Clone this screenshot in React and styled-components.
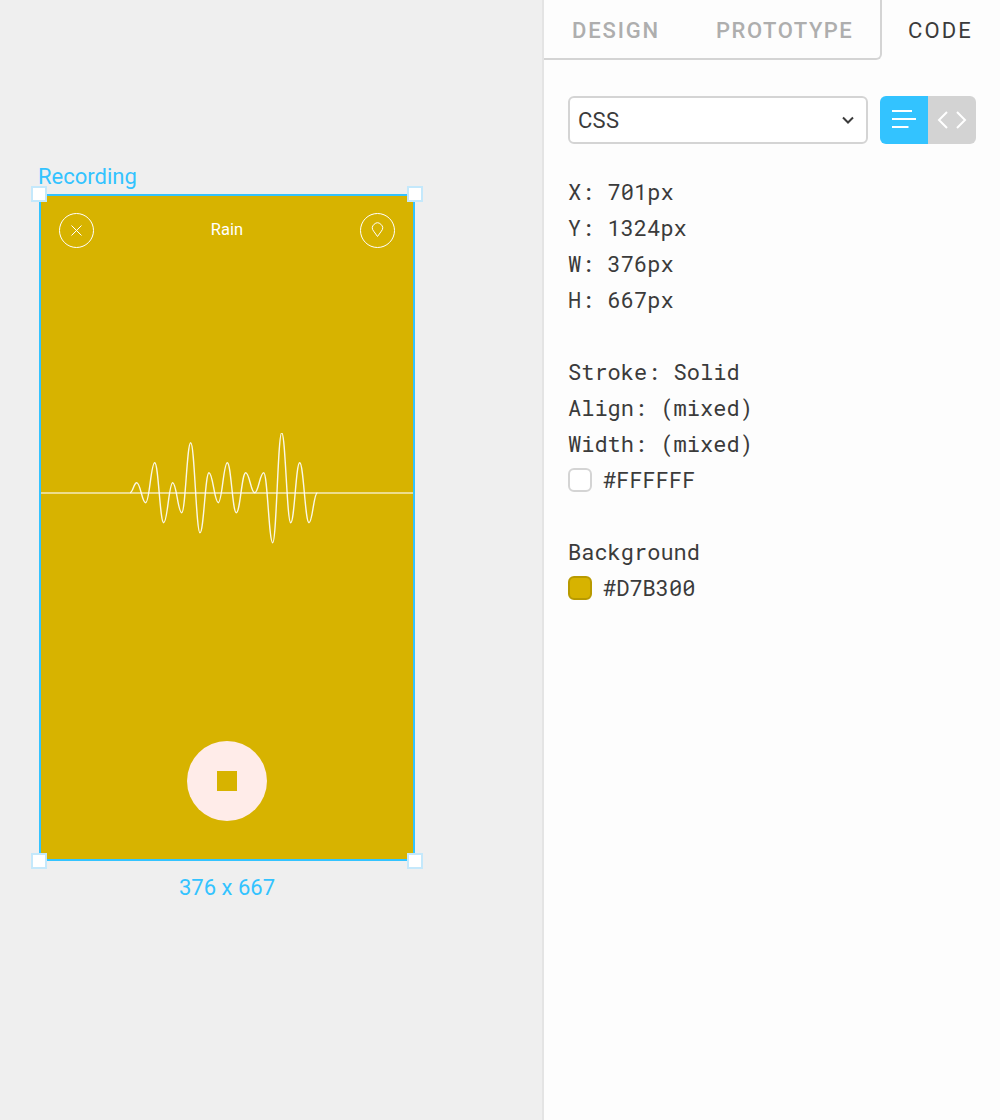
import React from "react";
import styled, { createGlobalStyle } from "styled-components";

const Global = createGlobalStyle`
  html, body { margin: 0; padding: 0; background: #efefef; }
  * { box-sizing: border-box; }
`;

const Page = styled.div`
  display: flex;
  width: 1000px;
  height: 1120px;
  overflow: hidden;
  font-family: Roboto, "Liberation Sans", sans-serif;
`;

const Canvas = styled.main`
  width: 542px;
  flex: none;
  padding: 161px 0 0 39px;
  background: #efefef;
`;

const FrameLabel = styled.div`
  height: 33px;
  margin-left: -1px;
  font-size: 22px;
  line-height: 31px;
  color: #33c3ff;
`;

const Frame = styled.section`
  position: relative;
  width: 376px;
  height: 667px;
  display: flex;
  flex-direction: column;
  background: #d7b300;
  border: 2px solid #33c3ff;
`;

const Handle = styled.span`
  position: absolute;
  width: 16px;
  height: 16px;
  background: #fff;
  border: 2px solid #c4e8fb;
  ${(p) => (p.$y === "top" ? "top: -10px;" : "bottom: -10px;")}
  ${(p) => (p.$x === "left" ? "left: -10px;" : "right: -10px;")}
`;

const Header = styled.header`
  display: flex;
  align-items: center;
  justify-content: space-between;
  height: 35px;
  margin: 17px 18px 0;
`;

const Title = styled.div`
  font-size: 16.5px;
  line-height: 20px;
  margin-top: -2px;
  color: #fff;
`;

const RoundIcon = styled.svg`
  display: block;
  width: 35px;
  height: 35px;
  fill: none;
  stroke: #fff;
  stroke-width: 1;
`;

const Wave = styled.svg`
  display: block;
  width: 372px;
  height: 120px;
  margin-top: 185px;
  flex: none;
`;

const StopButton = styled.button`
  display: flex;
  align-items: center;
  justify-content: center;
  width: 80px;
  height: 80px;
  margin: 188px auto 0;
  padding: 0;
  border: 0;
  border-radius: 50%;
  background: #ffece9;
`;

const StopSquare = styled.span`
  width: 20px;
  height: 20px;
  background: #d7b300;
`;

const Dimensions = styled.div`
  width: 376px;
  margin-top: 14px;
  text-align: center;
  font-size: 22px;
  line-height: 26px;
  color: #33c3ff;
`;

const Panel = styled.aside`
  flex: 1;
  background: #fdfdfd;
  border-left: 2px solid #e4e4e4;
`;

const Tabs = styled.nav`
  display: flex;
  height: 60px;
`;

const InactiveTabs = styled.div`
  display: flex;
  width: 338px;
  height: 60px;
  padding-left: 28px;
  gap: 56px;
  border-right: 2px solid #d4d4d4;
  border-bottom: 2px solid #d4d4d4;
  border-bottom-right-radius: 6px;
`;

const Tab = styled.div`
  font-size: 22px;
  font-weight: ${(p) => (p.$active ? 400 : 500)};
  letter-spacing: ${(p) => p.$spacing};
  line-height: 61px;
  color: ${(p) => (p.$active ? "#3b3b3b" : "#aeaeae")};
  ${(p) => p.$active && "margin-left: 26px;"}
`;

const Body = styled.div`
  padding: 36px 24px 0 24px;
`;

const Controls = styled.div`
  display: flex;
  gap: 12px;
  margin-bottom: 29px;
`;

const Select = styled.div`
  display: flex;
  align-items: center;
  justify-content: space-between;
  width: 300px;
  height: 48px;
  padding: 0 12px 0 8px;
  background: #fff;
  border: 2px solid #d4d4d4;
  border-radius: 6px;
  font-size: 22px;
  letter-spacing: 0.3px;
  color: #3b3b3b;
`;

const Toggle = styled.div`
  display: flex;
  width: 96px;
  height: 48px;
  border-radius: 6px;
  overflow: hidden;
`;

const ToggleButton = styled.div`
  display: flex;
  align-items: center;
  justify-content: center;
  width: 48px;
  background: ${(p) => (p.$active ? "#33c3ff" : "#d3d3d3")};
`;

const Line = styled.div`
  display: flex;
  align-items: center;
  height: 36px;
  font-family: "Roboto Mono", "DejaVu Sans Mono", "Liberation Mono", monospace;
  font-size: 22px;
  color: #3b3b3b;
  white-space: pre;
  margin-top: ${(p) => (p.$gap ? "36px" : "0")};
`;

const Swatch = styled.span`
  width: 24px;
  height: 24px;
  margin: 2px 11px 0 0;
  border-radius: 6px;
  border: 2px solid ${(p) => p.$border};
  background: ${(p) => p.$color};
`;

const wavePoints = [
  [130, 492.7], [136.7, 482.7], [145.7, 502.7], [154.7, 462.7], [163.7, 522.7],
  [172.7, 482.7], [181.7, 512.7], [190.7, 442.7], [200, 532.7], [209, 472.7],
  [218.3, 502.7], [227.3, 462.7], [236.3, 512.7], [245.7, 472.7], [254.7, 492.7],
  [263.7, 472.7], [272.7, 542.7], [281.7, 432.7], [290.7, 522.7], [299.7, 462.7],
  [309, 522.7], [317.3, 492.7],
];

const wavePath = wavePoints
  .map(([x, y], i) => {
    if (i === 0) return `M${x} ${y}`;
    const [px, py] = wavePoints[i - 1];
    const k = (x - px) * 0.42;
    return `C${(px + k).toFixed(1)} ${py} ${(x - k).toFixed(1)} ${y} ${x} ${y}`;
  })
  .join(" ");

export default function App() {
  return (
    <Page>
      <Global />
      <Canvas>
        <FrameLabel>Recording</FrameLabel>
        <Frame>
          <Handle $x="left" $y="top" />
          <Handle $x="right" $y="top" />
          <Handle $x="left" $y="bottom" />
          <Handle $x="right" $y="bottom" />
          <Header>
            <RoundIcon viewBox="0 0 35 35">
              <circle cx="17.5" cy="17.5" r="17" />
              <path d="M12.5 12.5l10 10M22.5 12.5l-10 10" />
            </RoundIcon>
            <Title>Rain</Title>
            <RoundIcon viewBox="0 0 35 35">
              <circle cx="17.5" cy="17.5" r="17" />
              <path d="M17.5 23.5l-3.9-5.4a5 5 0 1 1 7.8 0z" />
            </RoundIcon>
          </Header>
          <Wave viewBox="41 433 372 120">
            <path d="M41 493H413" stroke="#fff" strokeOpacity="0.55" strokeWidth="2" fill="none" />
            <path d={wavePath} stroke="#fff" strokeOpacity="0.9" strokeWidth="1.4" fill="none" />
          </Wave>
          <StopButton aria-label="Stop">
            <StopSquare />
          </StopButton>
        </Frame>
        <Dimensions>376 x 667</Dimensions>
      </Canvas>
      <Panel>
        <Tabs>
          <InactiveTabs>
            <Tab $spacing="1.85px">DESIGN</Tab>
            <Tab $spacing="1.5px">PROTOTYPE</Tab>
          </InactiveTabs>
          <Tab $active $spacing="2.1px">CODE</Tab>
        </Tabs>
        <Body>
          <Controls>
            <Select>
              CSS
              <svg width="12" height="8" viewBox="0 0 12 8" fill="none" stroke="#3b3b3b" strokeWidth="2">
                <path d="M1 1.5l5 5 5-5" />
              </svg>
            </Select>
            <Toggle>
              <ToggleButton $active>
                <svg width="24" height="20" viewBox="0 0 24 20" stroke="#fff" strokeWidth="2" fill="none">
                  <path d="M0 1h20M0 9h24M0 17h16.5" />
                </svg>
              </ToggleButton>
              <ToggleButton>
                <svg width="30" height="20" viewBox="0 0 30 20" stroke="#fff" strokeWidth="2" fill="none">
                  <path d="M10 2l-8 8 8 8M20 2l8 8-8 8" />
                </svg>
              </ToggleButton>
            </Toggle>
          </Controls>
          <Line>X: 701px</Line>
          <Line>Y: 1324px</Line>
          <Line>W: 376px</Line>
          <Line>H: 667px</Line>
          <Line $gap>Stroke: Solid</Line>
          <Line>Align: (mixed)</Line>
          <Line>Width: (mixed)</Line>
          <Line><Swatch $color="#ffffff" $border="#d4d4d4" />#FFFFFF</Line>
          <Line $gap>Background</Line>
          <Line><Swatch $color="#d7b300" $border="#b89a00" />#D7B300</Line>
        </Body>
      </Panel>
    </Page>
  );
}
